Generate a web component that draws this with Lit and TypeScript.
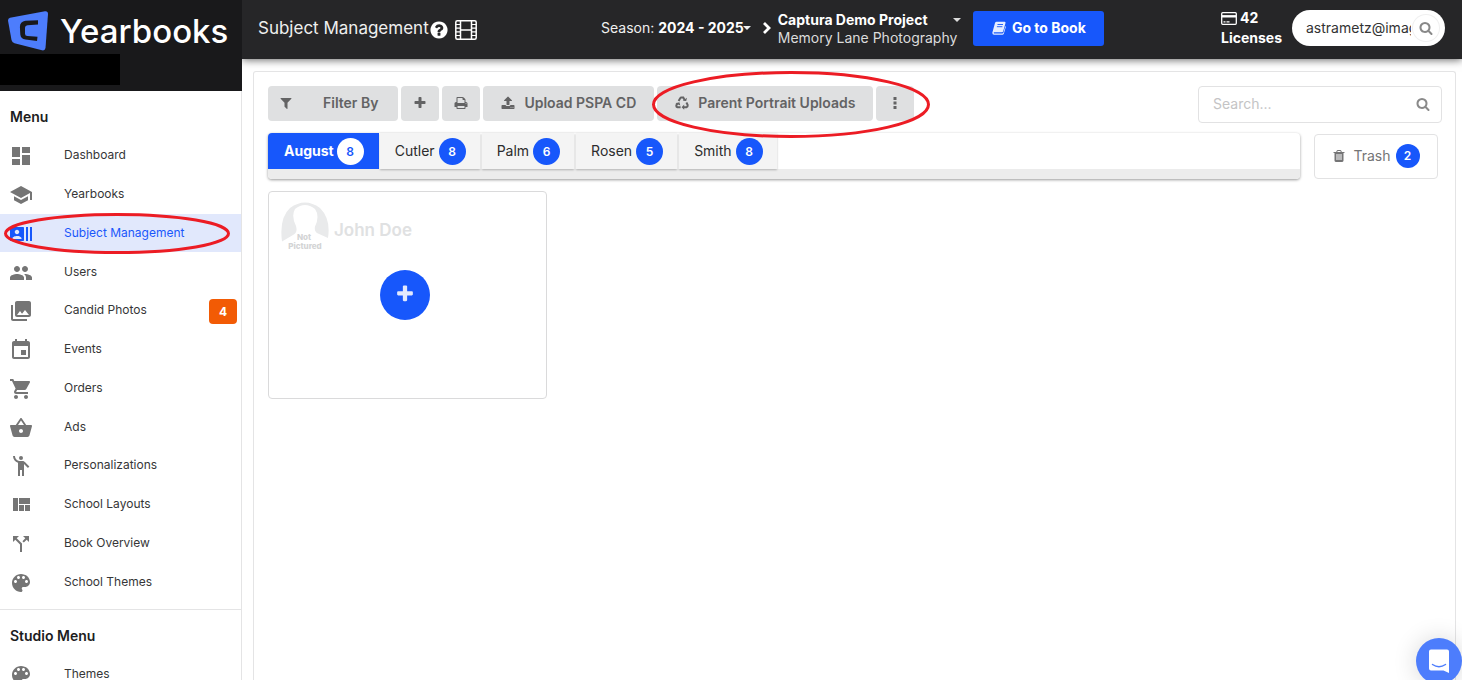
import { LitElement, html, css, svg } from "lit";
import { customElement, property, state } from "lit/decorators.js";
import { classMap } from "lit/directives/class-map.js";

interface IconDef {
  box: string;
  d: string;
}

const material = (d: string): IconDef => ({ box: "0 0 24 24", d });
const awesome = (d: string): IconDef => ({ box: "0 0 1792 1792", d });

const ICONS: Record<string, IconDef> = {
  dashboard: material("M3 13h8V3H3v10zm0 8h8v-6H3v6zm10 0h8V11h-8v10zm0-18v6h8V3h-8z"),
  school: material("M5 13.18v4L12 21l7-3.82v-4L12 17l-7-3.82zM12 3L1 9l11 6 9-4.91V17h2V9L12 3z"),
  actors: material(
    "M21 5v14h2V5h-2zm-4 14h2V5h-2v14zM14 5H2c-.55 0-1 .45-1 1v12c0 .55.45 1 1 1h12c.55 0 1-.45 1-1V6c0-.55-.45-1-1-1zM8 7.75c1.24 0 2.25 1.01 2.25 2.25S9.24 12.25 8 12.25 5.75 11.24 5.75 10 6.76 7.75 8 7.75zM12.5 17h-9v-.75c0-1.5 3-2.25 4.5-2.25s4.5.75 4.5 2.25V17z"
  ),
  people: material(
    "M16 11c1.66 0 2.99-1.34 2.99-3S17.66 5 16 5c-1.66 0-3 1.34-3 3s1.34 3 3 3zm-8 0c1.66 0 2.99-1.34 2.99-3S9.66 5 8 5C6.34 5 5 6.34 5 8s1.34 3 3 3zm0 2c-2.33 0-7 1.17-7 3.5V19h14v-2.5c0-2.33-4.67-3.5-7-3.5zm8 0c-.29 0-.62.02-.97.05 1.16.84 1.97 1.97 1.97 3.45V19h6v-2.5c0-2.33-4.67-3.5-7-3.5z"
  ),
  photos: material(
    "M22 16V4c0-1.1-.9-2-2-2H8c-1.1 0-2 .9-2 2v12c0 1.1.9 2 2 2h12c1.1 0 2-.9 2-2zm-11-4l2.03 2.71L16 11l4 5H8l3-4zM2 6v14c0 1.1.9 2 2 2h14v-2H4V6H2z"
  ),
  event: material(
    "M17 12h-5v5h5v-5zM16 1v2H8V1H6v2H5c-1.11 0-1.99.9-1.99 2L3 19c0 1.1.89 2 2 2h14c1.1 0 2-.9 2-2V5c0-1.1-.9-2-2-2h-1V1h-2zm3 18H5V8h14v11z"
  ),
  cart: material(
    "M7 18c-1.1 0-1.99.9-1.99 2S5.9 22 7 22s2-.9 2-2-.9-2-2-2zM1 2v2h2l3.6 7.59-1.35 2.45c-.16.28-.25.61-.25.96 0 1.1.9 2 2 2h12v-2H7.42c-.14 0-.25-.11-.25-.25l.03-.12.9-1.63h7.45c.75 0 1.41-.41 1.75-1.03l3.58-6.49c.08-.14.12-.31.12-.48 0-.55-.45-1-1-1H5.21l-.94-2H1zm16 16c-1.1 0-1.99.9-1.99 2s.89 2 1.99 2 2-.9 2-2-.9-2-2-2z"
  ),
  basket: material(
    "M17.21 9l-4.38-6.56c-.19-.28-.51-.42-.83-.42-.32 0-.64.14-.83.43L6.79 9H2c-.55 0-1 .45-1 1 0 .09.01.18.04.27l2.54 9.27c.23.84 1 1.46 1.92 1.46h13c.92 0 1.69-.62 1.93-1.46l2.54-9.27L23 10c0-.55-.45-1-1-1h-4.79zM9 9l3-4.4L15 9H9zm3 8c-1.1 0-2-.9-2-2s.9-2 2-2 2 .9 2 2-.9 2-2 2z"
  ),
  person: material(
    "M12 2a2 2 0 1 0 0 4 2 2 0 0 0 0-4zM15.89 8.11C15.5 7.72 14.83 7 13.53 7h-2.54C8.24 6.99 6 4.75 6 2H4c0 3.16 2.11 5.84 5 6.71V22h2v-6h2v6h2V10.05L18.95 14l1.41-1.41-4.47-4.48z"
  ),
  quilt: material("M10 18h5v-6h-5v6zm-6 0h5V5H4v13zm12 0h5v-6h-5v6zM10 5v6h11V5H10z"),
  split: material(
    "M14 4l2.29 2.29-2.88 2.88 1.42 1.42 2.88-2.88L20 10V4zm-4 0H4v6l2.29-2.29 4.71 4.7V20h2v-8.41l-5.29-5.3z"
  ),
  palette: material(
    "M12 3c-4.97 0-9 4.03-9 9s4.03 9 9 9c.83 0 1.5-.67 1.5-1.5 0-.39-.15-.74-.39-1.01-.23-.26-.38-.61-.38-.99 0-.83.67-1.5 1.5-1.5H16c2.76 0 5-2.24 5-5 0-4.42-4.03-8-9-8zm-5.5 9c-.83 0-1.5-.67-1.5-1.5S5.67 9 6.5 9 8 9.67 8 10.5 7.33 12 6.5 12zm3-4C8.67 8 8 7.33 8 6.5S8.67 5 9.5 5s1.5.67 1.5 1.5S10.33 8 9.5 8zm5 0c-.83 0-1.5-.67-1.5-1.5S13.67 5 14.5 5s1.5.67 1.5 1.5S15.33 8 14.5 8zm3 4c-.83 0-1.5-.67-1.5-1.5S16.67 9 17.5 9s1.5.67 1.5 1.5-.67 1.5-1.5 1.5z"
  ),
  plus: awesome(
    "M1600 736v192q0 40-28 68t-68 28h-416v416q0 40-28 68t-68 28h-192q-40 0-68-28t-28-68v-416h-416q-40 0-68-28t-28-68v-192q0-40 28-68t68-28h416v-416q0-40 28-68t68-28h192q40 0 68 28t28 68v416h416q40 0 68 28t28 68z"
  ),
  filter: awesome(
    "M1595 295q17 41-14 70l-493 493v742q0 42-39 59-13 5-25 5-27 0-45-19l-256-256q-19-19-19-45v-486l-493-493q-31-29-14-70 17-39 59-39h1280q42 0 59 39z"
  ),
  print: awesome(
    "M448 1536h896v-256h-896v256zm0-640h896v-384h-160q-40 0-68-28t-28-68v-160h-640v640zm1152 64q0-26-19-45t-45-19-45 19-19 45 19 45 45 19 45-19 19-45zm128 0v416q0 13-9.5 22.5t-22.5 9.5h-224v160q0 40-28 68t-68 28h-960q-40 0-68-28t-28-68v-160h-224q-13 0-22.5-9.5t-9.5-22.5v-416q0-79 56.5-135.5t135.5-56.5h64v-544q0-40 28-68t68-28h672q40 0 88 20t76 48l152 152q28 28 48 76t20 88v256h64q79 0 135.5 56.5t56.5 135.5z"
  ),
  upload: awesome(
    "M1344 1472q0-26-19-45t-45-19-45 19-19 45 19 45 45 19 45-19 19-45zm256 0q0-26-19-45t-45-19-45 19-19 45 19 45 45 19 45-19 19-45zm128-224v320q0 40-28 68t-68 28h-1472q-40 0-68-28t-28-68v-320q0-40 28-68t68-28h427q21 56 70.5 92t110.5 36h256q61 0 110.5-36t70.5-92h427q40 0 68 28t28 68zm-325-648q-17 40-59 40h-256v448q0 26-19 45t-45 19h-256q-26 0-45-19t-19-45v-448h-256q-42 0-59-40-17-39 14-69l448-448q18-19 45-19t45 19l448 448q31 30 14 69z"
  ),
  trash: awesome(
    "M704 1376v-704q0-14-9-23t-23-9h-64q-14 0-23 9t-9 23v704q0 14 9 23t23 9h64q14 0 23-9t9-23zm256 0v-704q0-14-9-23t-23-9h-64q-14 0-23 9t-9 23v704q0 14 9 23t23 9h64q14 0 23-9t9-23zm256 0v-704q0-14-9-23t-23-9h-64q-14 0-23 9t-9 23v704q0 14 9 23t23 9h64q14 0 23-9t9-23zm-544-992h448l-48-117q-7-9-17-11h-317q-10 2-17 11zm928 32v64q0 14-9 23t-23 9h-96v948q0 83-47 143.5t-113 60.5h-832q-66 0-113-58.5t-47-141.5v-952h-96q-14 0-23-9t-9-23v-64q0-14 9-23t23-9h309l70-167q15-37 54-63t79-26h320q40 0 79 26t54 63l70 167h309q14 0 23 9t9 23z"
  ),
  search: awesome(
    "M1216 832q0-185-131.5-316.5t-316.5-131.5-316.5 131.5-131.5 316.5 131.5 316.5 316.5 131.5 316.5-131.5 131.5-316.5zm512 832q0 52-38 90t-90 38q-54 0-90-38l-343-342q-179 124-399 124-143 0-273.5-55.5t-225-150-150-225-55.5-273.5 55.5-273.5 150-225 225-150 273.5-55.5 273.5 55.5 225 150 150 225 55.5 273.5q0 220-124 399l343 343q37 37 37 90z"
  ),
  help: awesome(
    "M1024 1376v-192q0-14-9-23t-23-9h-192q-14 0-23 9t-9 23v192q0 14 9 23t23 9h192q14 0 23-9t9-23zm256-672q0-88-55.5-163t-138.5-116-170-41q-243 0-371 213-15 24 8 42l132 100q7 6 19 6 16 0 25-12 53-68 86-92 34-24 86-24 48 0 85.5 26t37.5 59q0 38-20 61t-68 45q-63 28-115.5 86.5t-52.5 125.5v36q0 14 9 23t23 9h192q14 0 23-9t9-23q0-19 21.5-49.5t54.5-49.5q32-18 49-28.5t46-35 44.5-48 28-60.5 12.5-81zm384 192q0 209-103 385.5t-279.5 279.5-385.5 103-385.5-103-279.5-279.5-103-385.5 103-385.5 279.5-279.5 385.5-103 385.5 103 279.5 279.5 103 385.5z"
  ),
  dots: { box: "0 0 14 14", d: "M5.5 1h3v3h-3zM5.5 5.5h3v3h-3zM5.5 10h3v3h-3z" },
  caret: { box: "0 0 8 4", d: "M0 0h8L4 4z" },
};

@customElement("yb-icon")
export class YbIcon extends LitElement {
  static styles = css`
    :host {
      display: inline-flex;
      flex: none;
      width: 14px;
      height: 14px;
    }
    .glyph {
      display: block;
      width: 100%;
      height: 100%;
      fill: currentColor;
    }
  `;

  @property() name = "plus";

  render() {
    const icon = ICONS[this.name];
    return html`<svg class="glyph" viewBox=${icon.box} aria-hidden="true">${svg`<path d=${icon.d} />`}</svg>`;
  }
}

@customElement("yb-sidebar")
export class YbSidebar extends LitElement {
  static styles = css`
    :host {
      display: flex;
      flex-direction: column;
      flex: none;
      position: relative;
      z-index: 1;
      width: 242px;
      overflow: hidden;
      background: #fff;
      font-size: 12px;
      color: #363637;
    }
    .brand {
      flex: none;
      height: 91px;
      background: #19191b;
    }
    .logo {
      display: flex;
      align-items: center;
      gap: 12px;
      height: 54px;
      padding: 0 0 0 8px;
      color: #fff;
      font-size: 33px;
      font-weight: 500;
      line-height: 44px;
      text-decoration: none;
    }
    .mark {
      flex: none;
      width: 40px;
      height: 40px;
      margin-top: 8px;
    }
    .word {
      padding-top: 8px;
    }
    .redacted {
      width: 120px;
      height: 31px;
      background: #000;
    }
    .menu {
      flex: 1;
      border-right: 1px solid #e4e4e5;
    }
    .heading {
      margin: 0;
      padding: 16px 10px 9px;
      font-size: 14px;
      line-height: 20px;
      font-weight: 600;
      color: #1d1d1e;
    }
    .list {
      display: grid;
      grid-auto-rows: 1fr;
      height: 465px;
      margin: 0;
      padding: 0;
      list-style: none;
    }
    .studio {
      height: 39px;
    }
    .link {
      display: flex;
      align-items: center;
      gap: 31px;
      height: 100%;
      padding: 0 4px 0 9px;
      color: inherit;
      text-decoration: none;
      line-height: 12px;
    }
    .icon {
      width: 24px;
      height: 24px;
      margin-top: 2px;
      color: #757575;
    }
    .link.active {
      background: #e1e8fc;
      color: #1a57fb;
    }
    .active .icon {
      color: #1757fb;
    }
    .count {
      margin-left: auto;
      margin-top: 2px;
      width: 28px;
      border-radius: 4px;
      background: #f25b05;
      color: #fff;
      font-weight: 700;
      line-height: 25px;
      text-align: center;
    }
    .divided {
      margin-top: 8px;
      padding-bottom: 8px;
      border-top: 1px solid #e4e4e5;
    }
  `;

  private items = [
    { label: "Dashboard", icon: "dashboard" },
    { label: "Yearbooks", icon: "school" },
    { label: "Subject Management", icon: "actors", active: true },
    { label: "Users", icon: "people" },
    { label: "Candid Photos", icon: "photos", count: 4 },
    { label: "Events", icon: "event" },
    { label: "Orders", icon: "cart" },
    { label: "Ads", icon: "basket" },
    { label: "Personalizations", icon: "person" },
    { label: "School Layouts", icon: "quilt" },
    { label: "Book Overview", icon: "split" },
    { label: "School Themes", icon: "palette" },
  ];

  private row(item: { label: string; icon: string; active?: boolean; count?: number }) {
    return html`<li>
      <a class=${classMap({ link: true, active: !!item.active })} href="#">
        <yb-icon class="icon" name=${item.icon}></yb-icon>
        <span>${item.label}</span>
        ${item.count ? html`<span class="count">${item.count}</span>` : ""}
      </a>
    </li>`;
  }

  render() {
    return html`
      <div class="brand">
        <a class="logo" href="#">
          <svg class="mark" viewBox="0 0 40 40" aria-hidden="true">
            <path
              fill="#4d7dfc"
              d="M2 6.800 L37 .3 Q40 0 40 3 L37.500 37 Q37 40 34 39.300 L6.500 32.300 Q4 31.500 3.500 29 L0 9.500 Q0 7.300 2 6.800Z"
            />
            <path
              fill="#19191b"
              d="M30 9.200V13.600L19.500 14.200Q17 14.400 17 16.800V22.700Q17 24.900 19.400 25L29.500 25.700L29 30L17.500 28.600Q12.800 27.800 12.300 23.500L11.900 16Q11.900 10.600 17.500 9.800Z"
            />
          </svg>
          <span class="word">Yearbooks</span>
        </a>
        <div class="redacted"></div>
      </div>
      <nav class="menu">
        <h2 class="heading">Menu</h2>
        <ul class="list">
          ${this.items.map((item) => this.row(item))}
        </ul>
        <h2 class="heading divided">Studio Menu</h2>
        <ul class="list studio">
          ${this.row({ label: "Themes", icon: "palette" })}
        </ul>
      </nav>
    `;
  }
}

@customElement("yb-topbar")
export class YbTopbar extends LitElement {
  static styles = css`
    :host {
      display: flex;
      align-items: center;
      flex: none;
      box-sizing: border-box;
      height: 59px;
      padding: 0 17px 3px 16px;
      background: #262628;
      box-shadow: 0 1px 8px rgba(0, 0, 0, 0.6);
      color: #fff;
      font-size: 14px;
      line-height: 18px;
      white-space: nowrap;
    }
    button {
      display: flex;
      align-items: center;
      margin: 0;
      padding: 0;
      border: 0;
      background: none;
      color: inherit;
      font: inherit;
      text-align: left;
    }
    .title {
      display: flex;
      align-items: center;
      flex: 0 1 343px;
      color: #efefef;
    }
    .title h1 {
      margin: 0;
      font-size: 17px;
      line-height: 24px;
      font-weight: 400;
    }
    .help {
      width: 20px;
      height: 20px;
      margin-top: 4px;
      color: #fff;
    }
    .film {
      display: block;
      width: 22px;
      height: 20px;
      margin: 4px 0 0 6px;
    }
    .season {
      gap: 4px;
      color: #f0f0f0;
    }
    .season strong {
      font-weight: 700;
      color: #fff;
    }
    .caret {
      width: 8px;
      height: 4px;
    }
    .season .caret {
      margin-left: -5px;
    }
    .chevron {
      width: 10px;
      height: 12px;
      margin: 0 6px 0 11px;
    }
    .project {
      padding-top: 2px;
      color: #dcdcdc;
    }
    .project strong {
      display: block;
      font-weight: 700;
      color: #fff;
    }
    .project .caret {
      align-self: flex-start;
      margin-top: 7px;
      margin-left: -4px;
    }
    .book {
      justify-content: center;
      gap: 6px;
      width: 131px;
      height: 35px;
      margin-left: 12px;
      border-radius: 3px;
      background: #1757fb;
      font-weight: 700;
    }
    .cover {
      width: 14px;
      height: 14px;
    }
    .licenses {
      margin-left: auto;
      font-weight: 700;
      line-height: 20px;
    }
    .amount {
      display: flex;
      align-items: center;
      gap: 3px;
    }
    .card {
      width: 16px;
      height: 13px;
    }
    .account {
      display: flex;
      align-items: center;
      box-sizing: border-box;
      width: 153px;
      height: 36px;
      margin-left: 10px;
      padding: 0 6px 0 14px;
      border-radius: 18px;
      background: #fff;
      color: #333;
    }
    .account input {
      flex: 1;
      min-width: 0;
      padding: 0;
      border: 0;
      outline: 0;
      background: none;
      color: inherit;
      font: inherit;
    }
    .account .find {
      justify-content: center;
      width: 26px;
      height: 26px;
      margin-left: 2px;
      border-radius: 13px;
      box-shadow: 0 0 0 1px #f0f0f0;
      color: #888;
    }
  `;

  render() {
    return html`
      <div class="title">
        <h1>Subject Management</h1>
        <button aria-label="Help"><yb-icon class="help" name="help"></yb-icon></button>
        <button aria-label="Video">
          <svg class="film" viewBox="0 0 22 20" fill="none" stroke="#fff" aria-hidden="true">
            <rect x="0.800" y="0.800" width="20.400" height="18.400" rx="1.500" stroke-width="1.500" />
            <path stroke-width="1.500" d="M5.500 1v18M16.500 1v18M5.500 10h11" />
            <path stroke-width="1.200" d="M1 4.500h4M1 8.200h4M1 11.800h4M1 15.500h4M17 4.500h4M17 8.200h4M17 11.800h4M17 15.500h4" />
          </svg>
        </button>
      </div>
      <button class="season">
        <span>Season:</span><strong>2024 - 2025</strong><yb-icon class="caret" name="caret"></yb-icon>
      </button>
      <svg class="chevron" viewBox="0 0 10 12" fill="none" stroke="#fff" stroke-width="2.800" aria-hidden="true">
        <path d="M2 1l5 5-5 5" />
      </svg>
      <button class="project">
        <span><strong>Captura Demo Project</strong>Memory Lane Photography</span>
        <yb-icon class="caret" name="caret"></yb-icon>
      </button>
      <button class="book">
        <svg class="cover" viewBox="0 0 14 14" aria-hidden="true">
          <path fill="#e6edff" d="M4.500 .8h8.300q1 .2.700 1.200l-2.300 8.300q-.3.900-1.200.900H2.300q-.8.100-.6.800.2.500.900.500h7.700q.8 0 1.100-.7l2-6.800q.6.400.4 1.100l-2 6.700q-.4 1-1.400 1H2Q.3 13.600.3 11.800L3 2Q3.400.9 4.500.8Z" />
          <path stroke="#1757fb" stroke-width="0.900" d="M5.500 3.500h5.500M4.900 5.700h5.500" />
        </svg>
        Go to Book
      </button>
      <div class="licenses">
        <div class="amount">
          <svg class="card" viewBox="0 0 16 13" fill="none" stroke="#fff" aria-hidden="true">
            <rect x="0.700" y="0.700" width="14.600" height="11.600" rx="1" stroke-width="1.300" />
            <path stroke-width="2.400" d="M1 4.300h14" />
            <path stroke-width="1.200" d="M2.500 9.800h2M5.500 9.800h3" />
          </svg>
          42
        </div>
        Licenses
      </div>
      <div class="account">
        <input aria-label="Account search" .value=${"astrametz@imag"} />
        <button class="find" aria-label="Find account"><yb-icon name="search"></yb-icon></button>
      </div>
    `;
  }
}

@customElement("yb-subjects")
export class YbSubjects extends LitElement {
  static styles = css`
    :host {
      display: block;
      flex: 1;
      margin: 12px 6px 0 11px;
      padding: 14px 13px 0 14px;
      border: 1px solid #e4e4e5;
      border-bottom: 0;
      border-radius: 3px 3px 0 0;
      font-size: 14px;
      line-height: 20px;
      white-space: nowrap;
    }
    button {
      display: flex;
      align-items: center;
      box-sizing: border-box;
      margin: 0;
      padding: 0;
      border: 0;
      font: inherit;
      color: inherit;
    }
    .toolbar {
      display: flex;
      align-items: flex-start;
      justify-content: space-between;
    }
    .actions {
      display: flex;
      gap: 3px;
    }
    .action {
      justify-content: center;
      gap: 9px;
      min-width: 38px;
      height: 35px;
      padding: 0 18px 2px 18px;
      border-radius: 4px;
      background: #dfe0e1;
      color: #636364;
      font-weight: 600;
    }
    .action.square {
      padding: 0 0 2px;
    }
    .action.wide {
      gap: 30px;
      padding: 0 20px 2px 11px;
    }
    .recycle {
      width: 14px;
      height: 14px;
    }
    .search {
      display: flex;
      align-items: center;
      box-sizing: border-box;
      width: 244px;
      height: 37px;
      padding: 0 11px 2px 14px;
      border: 1px solid #e2e2e3;
      border-radius: 4px;
      color: #8a8a8a;
    }
    .search input {
      flex: 1;
      min-width: 0;
      padding: 0;
      border: 0;
      outline: 0;
      background: none;
      font: inherit;
      color: #333;
    }
    .search input::placeholder {
      color: #c4c4c5;
      opacity: 1;
    }
    .groups {
      display: flex;
      align-items: flex-start;
      gap: 14px;
      margin-top: 10px;
      padding-right: 4px;
    }
    .tabs {
      display: flex;
      flex: 1;
      gap: 2px;
      border-bottom: 10px solid #ececec;
      border-radius: 4px;
      box-shadow: 0 1px 3px rgba(0, 0, 0, 0.4);
    }
    .tab {
      gap: 4px;
      height: 36px;
      padding: 0 14px 0 15px;
      background: #f4f4f4;
      box-shadow: 0 1px 2px rgba(0, 0, 0, 0.25);
      color: #2c2c2d;
    }
    .tab.current {
      gap: 3px;
      margin-right: -1px;
      padding: 0 15px 0 16px;
      border-radius: 4px 0 0 0;
      background: #1757fb;
      box-shadow: none;
      color: #fff;
      font-weight: 700;
    }
    .pill {
      width: 27px;
      border-radius: 50%;
      background: #1757fb;
      color: #fff;
      font-size: 12px;
      font-weight: 600;
      line-height: 27px;
      text-align: center;
    }
    .current .pill {
      background: #fff;
      color: #1757fb;
    }
    .trash {
      justify-content: center;
      gap: 7px;
      width: 124px;
      height: 45px;
      margin-top: 1px;
      padding-bottom: 1px;
      border: 1px solid #e2e2e3;
      border-radius: 4px;
      background: #fff;
      color: #757576;
    }
    .trash .pill {
      width: 24px;
      margin-left: -2px;
      line-height: 24px;
    }
    .cards {
      display: flex;
      margin-top: 12px;
    }
    .card {
      display: flex;
      flex-direction: column;
      align-items: center;
      gap: 20px;
      box-sizing: border-box;
      width: 279px;
      height: 208px;
      padding: 10px 17px 10px 12px;
      border: 1px solid #dadadb;
      border-radius: 4px;
    }
    .subject {
      display: flex;
      align-items: center;
      gap: 5px;
      width: 100%;
      color: #e0e1e2;
      font-size: 17px;
      font-weight: 600;
      line-height: 24px;
    }
    .avatar {
      flex: none;
      width: 48px;
      height: 48px;
    }
    .caption {
      fill: #d3d4d5;
      font-size: 8px;
      font-weight: 800;
      text-anchor: middle;
    }
    .name {
      margin-top: 8px;
    }
    .add {
      justify-content: center;
      width: 50px;
      height: 50px;
      border-radius: 25px;
      background: #1757fb;
      color: #e2e9fd;
    }
    .add yb-icon {
      width: 20px;
      height: 20px;
      margin-bottom: 2px;
    }
  `;

  @state() private current = "August";

  private groups = [
    { name: "August", count: 8 },
    { name: "Cutler", count: 8 },
    { name: "Palm", count: 6 },
    { name: "Rosen", count: 5 },
    { name: "Smith", count: 8 },
  ];

  render() {
    return html`
      <div class="toolbar">
        <div class="actions">
          <button class="action wide"><yb-icon name="filter"></yb-icon>Filter By</button>
          <button class="action square" aria-label="Add"><yb-icon name="plus"></yb-icon></button>
          <button class="action square" aria-label="Print"><yb-icon name="print"></yb-icon></button>
          <button class="action"><yb-icon name="upload"></yb-icon>Upload PSPA CD</button>
          <button class="action">
            <svg class="recycle" viewBox="0 0 14 14" fill="none" stroke="currentColor" aria-hidden="true">
              <path stroke-width="2" d="M3.600 5L5.200 2.200Q5.600 1.600 6.300 1.600H8.300L9.600 3.900" />
              <path stroke-width="2" d="M11.400 6.600L12.700 9Q12.900 10.800 11.500 11.200H8.600" />
              <path stroke-width="2" d="M5.600 11.200H2.500Q1 10.800 1.400 9.200L2.600 7.200" />
              <path fill="currentColor" stroke="none" d="M7.800 4.800l3.400.2.800-3.300zM9.200 8.600v5.200L6.600 11.200zM.4 7.200l4-1 .9 3.200z" />
            </svg>
            Parent Portrait Uploads
          </button>
          <button class="action square" aria-label="More"><yb-icon name="dots"></yb-icon></button>
        </div>
        <label class="search">
          <input type="text" placeholder="Search..." aria-label="Search subjects" />
          <yb-icon name="search"></yb-icon>
        </label>
      </div>
      <div class="groups">
        <div class="tabs" role="tablist">
          ${this.groups.map(
            (g) => html`<button
              role="tab"
              aria-selected=${g.name === this.current}
              class=${classMap({ tab: true, current: g.name === this.current })}
              @click=${() => (this.current = g.name)}
            >
              ${g.name}<span class="pill">${g.count}</span>
            </button>`
          )}
        </div>
        <button class="trash"><yb-icon name="trash"></yb-icon>Trash<span class="pill">2</span></button>
      </div>
      <div class="cards">
        <article class="card">
          <div class="subject">
            <svg class="avatar" viewBox="0 0 48 48" role="img" aria-label="Not pictured">
              <path
                fill="#e9eaeb"
                d="M1 39.500 Q-2 16 9 6 Q24 -5 39 6 Q50 17 47 36 L37 31.500 Q33 30 34 24.500 Q39 14 34 7 Q24 -1 14 7 Q10 14 15 24 Q17 31 12 33Z"
              />
              <text class="caption" x="23" y="38">Not</text>
              <text class="caption" x="24" y="47">Pictured</text>
            </svg>
            <span class="name">John Doe</span>
          </div>
          <button class="add" aria-label="Add subject"><yb-icon name="plus"></yb-icon></button>
        </article>
      </div>
    `;
  }
}

@customElement("app-root")
export class AppRoot extends LitElement {
  static styles = css`
    :host {
      display: flex;
      position: relative;
      height: calc(100vh - 18px);
      overflow: hidden;
      background: #fff;
      font-family: Inter, "Liberation Sans", sans-serif;
    }
    .main {
      display: flex;
      flex-direction: column;
      flex: 1;
      min-width: 0;
    }
    .ring {
      position: absolute;
      z-index: 2;
      overflow: visible;
      fill: none;
      stroke: #ec1c24;
      stroke-width: 3px;
      pointer-events: none;
    }
    .ring.nav {
      left: 4px;
      top: 213px;
      width: 226px;
      height: 41px;
    }
    .ring.uploads {
      left: 652px;
      top: 71px;
      width: 278px;
      height: 67px;
    }
    .chat {
      position: absolute;
      right: 0;
      bottom: -4px;
      width: 46px;
      height: 46px;
      padding: 0;
      border: 0;
      border-radius: 23px;
      background: #4d7dfc;
      box-shadow: 0 1px 24px rgba(0, 0, 0, 0.16);
    }
    .bubble {
      display: block;
      width: 22px;
      height: 24px;
      margin: 0 auto;
    }
  `;

  render() {
    return html`
      <yb-sidebar></yb-sidebar>
      <main class="main">
        <yb-topbar></yb-topbar>
        <yb-subjects></yb-subjects>
      </main>
      <svg class="ring nav" viewBox="0 0 226 41" preserveAspectRatio="none" aria-hidden="true">
        <ellipse cx="113" cy="20.500" rx="111.500" ry="19" />
      </svg>
      <svg class="ring uploads" viewBox="0 0 278 67" preserveAspectRatio="none" aria-hidden="true">
        <ellipse cx="139" cy="33.500" rx="137.500" ry="32" />
      </svg>
      <button class="chat" aria-label="Open chat">
        <svg class="bubble" viewBox="0 0 22 24" aria-hidden="true">
          <path fill="#fff" d="M3 .5h16q2 0 2 2V24l-5.500-2.500H3q-2 0-2-2v-17q0-2 2-2z" />
          <path fill="none" stroke="#4d7dfc" stroke-width="1.500" stroke-linecap="round" d="M4.500 15.500q6.500 4.500 13 0" />
        </svg>
      </button>
    `;
  }
}
